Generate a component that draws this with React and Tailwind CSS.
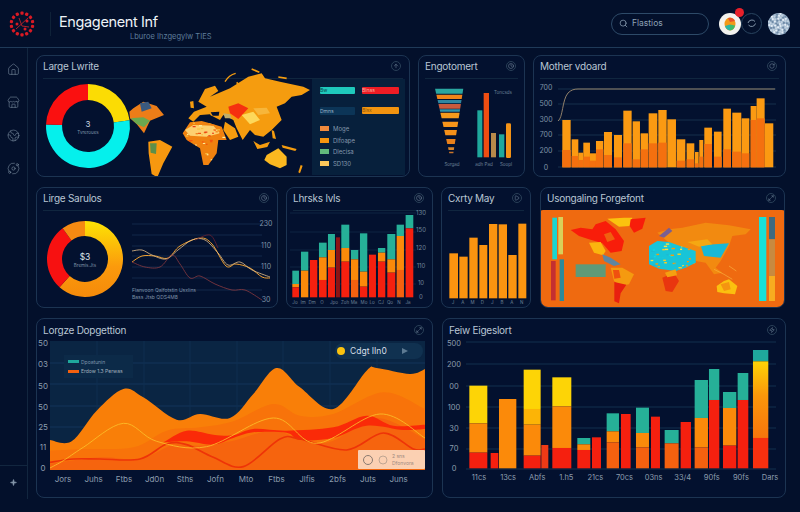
import React from "react";
import { House, Store, Earth, Orbit, Search, ArrowUp, Clock, Play, Maximize2, Zap, Sparkle, RotateCw } from "lucide-react";

const RED = "#f5200f";
const ORANGE = "#fb8a0a";
const DEEP = "#f5610f";
const TEAL = "#1fa89c";
const YELLOW = "#fdd406";

// catmull-rom through the points, returned as an svg path
const smooth = (pts) => {
  let d = `M${pts[0][0]} ${pts[0][1]}`;
  for (let i = 0; i < pts.length - 1; i++) {
    const p0 = pts[i - 1] || pts[i];
    const p1 = pts[i];
    const p2 = pts[i + 1];
    const p3 = pts[i + 2] || p2;
    const c1 = [p1[0] + (p2[0] - p0[0]) / 6, p1[1] + (p2[1] - p0[1]) / 6];
    const c2 = [p2[0] - (p3[0] - p1[0]) / 6, p2[1] - (p3[1] - p1[1]) / 6];
    d += ` C${c1[0]} ${c1[1]} ${c2[0]} ${c2[1]} ${p2[0]} ${p2[1]}`;
  }
  return d;
};

const area = (pts, bottom) =>
  `${smooth(pts)} L${pts[pts.length - 1][0]} ${bottom} L${pts[0][0]} ${bottom} Z`;

const arc = (cx, cy, ro, ri, a0, a1) => {
  const pt = (r, a) => {
    const t = ((a - 90) * Math.PI) / 180;
    return `${cx + r * Math.cos(t)} ${cy + r * Math.sin(t)}`;
  };
  const large = a1 - a0 > 180 ? 1 : 0;
  return `M${pt(ro, a0)} A${ro} ${ro} 0 ${large} 1 ${pt(ro, a1)} L${pt(ri, a1)} A${ri} ${ri} 0 ${large} 0 ${pt(ri, a0)} Z`;
};

const Poly = ({ p, f, o }) => <polygon points={p} fill={f} opacity={o} />;

// speckled land texture, fixed sequence so the picture stays the same
const Speckles = ({ id, shape, box, colors, n = 60, size = 6 }) => {
  const [x, y, w, h] = box;
  return (
    <>
      <clipPath id={id}>
        <polygon points={shape} />
      </clipPath>
      <g clipPath={`url(#${id})`}>
        {Array.from({ length: n }, (_, i) => (
          <rect
            key={i}
            x={x + ((i * 0.618034) % 1) * w}
            y={y + ((i * i * 0.0371 + i * 0.412) % 1) * h}
            width={size + (i % 3) * 2}
            height={size * 0.7}
            fill={colors[i % colors.length]}
          />
        ))}
      </g>
    </>
  );
};

const Chart = ({ x, y, w, h, children }) => (
  <svg
    viewBox={`${x} ${y} ${w} ${h}`}
    width={w}
    height={h}
    className="block shrink-0 overflow-visible"
  >
    {children}
  </svg>
);

const Tick = ({ x, y, children, anchor = "middle" }) => (
  <text x={x} y={y} textAnchor={anchor} className="fill-[#7f93a8] text-[7px]">
    {children}
  </text>
);

const Tiny = ({ x, y, children }) => (
  <text x={x} y={y} textAnchor="middle" className="fill-[#6c8197] text-[4.5px]">
    {children}
  </text>
);

const Card = ({ title, icon: Icon, width, height, line = true, children }) => (
  <section
    style={{ width, height }}
    className="shrink-0 overflow-hidden rounded-lg border border-[#1c3452] bg-[#03112f]"
  >
    <div
      className={`mx-[6px] flex h-[23px] items-center justify-between pb-[2px] pr-[2px] ${
        line ? "border-b border-[#10263f]" : ""
      }`}
    >
      <h2 className="text-[10px] leading-none tracking-tight text-[#b9c6d4]">{title}</h2>
      <span className="flex h-[10px] w-[10px] items-center justify-center rounded-full border border-[#2a4058] text-[#7d90a5]">
        <Icon size={6} />
      </span>
    </div>
    {children}
  </section>
);

/* ── Header ─────────────────────────────────────────────────────────────── */
const Logo = () => {
  const dots = Array.from({ length: 14 }, (_, i) => (i * 360) / 14);
  return (
    <svg width="28" height="28" viewBox="-14 -14 28 28" className="shrink-0">
      {dots.map((a) => (
        <rect
          key={a}
          x="-1.6"
          y="-12.4"
          width="3.2"
          height="3.2"
          rx="1"
          fill="#d91a24"
          transform={`rotate(${a})`}
        />
      ))}
      <circle cx="-5" cy="0" r="1.5" fill="#d91a24" />
      <circle cx="5" cy="-3" r="1.5" fill="#d91a24" />
      <circle cx="3" cy="5" r="1.5" fill="#d91a24" />
      <path d="M-6 5 L6 -6 M-3 -6 L0 2 L7 3" stroke="#a8222c" strokeWidth="1" fill="none" />
    </svg>
  );
};

const Speckle = () => {
  const dots = Array.from({ length: 60 }, (_, i) => {
    const r = 10.5 * Math.sqrt((i + 0.5) / 60);
    const t = i * 2.4;
    return [r * Math.cos(t), r * Math.sin(t), i % 3];
  });
  return (
    <svg width="22" height="22" viewBox="-11 -11 22 22">
      <circle r="11" fill="#9fb6cd" />
      {dots.map(([x, y, k], i) => (
        <circle key={i} cx={x} cy={y} r="1.1" fill={k === 0 ? "#e4edf5" : k === 1 ? "#6f8aa6" : "#c2d2e0"} />
      ))}
    </svg>
  );
};

const Header = () => (
  <header className="flex h-[48px] items-center border-b border-[#1f3a58] pl-[8px] pr-[10px]">
    <Logo />
    <span className="ml-[14px] h-[24px] w-px bg-[#0f2238]" />
    <div className="relative ml-[8px] h-[30px] w-[200px]">
      <div className="text-[14.5px] leading-[25px] tracking-tight text-[#eef3f7]">Engagenent Inf</div>
      <div className="absolute left-[71px] top-[24px] whitespace-nowrap text-[7.5px] leading-none text-[#5f7e9c]">
        Lburoe Ihzgegylw TIES
      </div>
    </div>
    <div className="ml-auto flex items-center">
      <div className="mr-[10px] flex h-[22px] w-[98px] items-center gap-[4px] rounded-full border border-[#2d4a68] pl-[7px] text-[8.5px] text-[#8ea2b6]">
        <Search size={9} />
        <span>Flastios</span>
      </div>
      <div className="relative h-[22px] w-[22px] rounded-full bg-[#f4f3ef]">
        <svg width="22" height="22" viewBox="0 0 22 22">
          <ellipse cx="11" cy="11" rx="5.5" ry="6.5" fill="#f39a1a" />
          <path d="M9 5a6 6 0 0 1 7 3l-5 1Z" fill="#e8542a" />
          <path d="M6 13a6 6 0 0 0 5 4.5l0-6Z" fill="#29b6a8" />
          <path d="M11 17.5a6 6 0 0 0 5-5l-5-1Z" fill="#3dbb6c" />
        </svg>
        <span className="absolute -right-[3px] -top-[5px] h-[9px] w-[9px] rounded-full bg-[#e8202a]" />
      </div>
      <svg width="21" height="21" viewBox="0 0 21 21" fill="none" className="shrink-0">
        <circle cx="10.5" cy="10.5" r="10" stroke="#2a4560" />
        <path d="M7 10a4 4 0 0 1 7-1.5M14.5 10.5a4 4 0 0 1-7 1.5" stroke="#8ea2b6" strokeWidth="0.9" />
      </svg>
      <div className="ml-[6px]">
        <Speckle />
      </div>
    </div>
  </header>
);

const Sidebar = () => (
  <aside className="flex h-[451px] w-[28px] shrink-0 flex-col items-center border-r border-[#12263f] text-[#8496aa]">
    <div className="flex flex-col items-center gap-[20px] pt-[15px] pr-[1px]">
      <House size={13} strokeWidth={1} />
      <Store size={13} strokeWidth={1} />
      <Earth size={13} strokeWidth={1} />
      <Orbit size={13} strokeWidth={1} />
    </div>
    <div className="mt-auto flex h-[34px] w-full items-center justify-center border-t border-[#12263f]">
      <Sparkle size={7} fill="#8496aa" />
    </div>
  </aside>
);

/* ── Row 1 ──────────────────────────────────────────────────────────────── */
const africaA = "38,205 60,172 95,168 130,178 155,185 170,225 145,225 140,265 115,300 100,300 90,250 50,225";

const TopMap = () => (
  <>
    <g transform="scale(0.3333)">
      <Poly f="#ec7d18" p="388,335 400,325 430,305 470,318 492,345 450,362 432,400 410,372 390,355" />
      <Poly f="#6aa84f" p="392,355 430,352 450,362 432,382 410,372" />
      <Poly f="#3a5a80" p="420,310 445,305 455,325 425,335" />
      <Poly f="#f7980f" p="445,425 480,420 517,440 490,490 472,532 455,522 446,460" />
      <Poly f="#5b8f4a" p="450,430 470,430 468,462 452,458" />
    </g>
    <g transform="translate(170 65) scale(0.3333)">
      <Poly f="#f59c0f" p="55,160 72,140 110,125 85,110 105,72 135,62 145,78 120,95 180,70 235,35 275,25 285,40 330,50 400,65 420,75 395,90 365,95 345,115 320,125 335,165 305,195 280,215 255,210 240,195 218,225 200,190 190,165 160,150 150,165 125,152 90,150 70,170" />
      <Poly f="#f0820f" p="38,205 60,172 95,168 130,178 155,185 170,225 145,225 140,265 115,300 100,300 90,250 50,225" />
      <Poly f="#f59c0f" p="165,170 195,190 205,215 180,225 160,195" />
      <Poly f="#fbb820" p="283,285 290,270 325,250 350,275 350,300 330,310 300,298" />
      <Poly f="#03112f" p="92,150 120,148 125,156 100,160" />
      <Poly f="#03112f" p="122,142 148,140 146,152 128,152" />
      <Poly f="#f5300f" p="175,125 205,115 235,130 205,162 180,145" />
      <Poly f="#fdd85a" p="215,150 250,140 270,165 240,178" />
      <Poly f="#f7b63a" p="250,130 290,128 300,145 265,150" />
      <Poly f="#bfae6a" p="160,145 180,148 185,160 165,160" />
      <Poly f="#fdd070" p="45,195 70,180 130,182 150,205 110,215 60,212" />
      <Speckles
        id="africa-top"
        shape={africaA}
        box={[40, 170, 130, 130]}
        colors={["#fdf0a0", "#f5500f", "#fbc040", "#e8300f", "#f07a10"]}
        n={70}
        size={5}
      />
      <Poly f="#f59c0f" p="250,228 270,240 300,230 292,246 262,252" />
      <Poly f="#f59c0f" p="305,195 312,198 318,222 308,220" />
      <Poly f="#f59c0f" p="335,240 380,252 376,258 338,248" />
      <Poly f="#f59c0f" p="385,322 392,300 398,302 390,325" />
      <Poly f="#f59c0f" p="60,110 70,108 72,130 62,128" />
      <path d="M165 50 C172 38 185 28 197 25" stroke="#f59c0f" strokeWidth="4" fill="none" />
      <path d="M200 52 L218 72" stroke="#f59c0f" strokeWidth="5" fill="none" />
      <path d="M245 12 L268 22" stroke="#f59c0f" strokeWidth="5" fill="none" />
      <path d="M325 36 L350 40" stroke="#f59c0f" strokeWidth="5" fill="none" />
      <path d="M300 172 L325 165" stroke="#f59c0f" strokeWidth="3" fill="none" />
    </g>
  </>
);

const CardA = () => (
  <Card title="Large Lwrite" icon={ArrowUp} width={374} height={122}>
    <div className="flex">
      <Chart x={37} y={79} w={275} h={97}>
        <path d={arc(88, 126, 42, 26, 0, 82)} fill="#fbdc04" />
        <path d={arc(88, 126, 42, 26, 82, 272)} fill="#05f0ec" />
        <path d={arc(88, 126, 42, 26, 272, 360)} fill="#fa1010" />
        <text x={88} y={127} textAnchor="middle" className="fill-[#cdd8e2] text-[8px]">3</text>
        <text x={88} y={134} textAnchor="middle" className="fill-[#7f94a9] text-[4.5px]">Tvreroues</text>
        <TopMap />
      </Chart>
      <div className="h-[96px] w-[93px] shrink-0 bg-[#07203c] px-[8px] pt-[8px]">
        <div className="grid grid-cols-2 gap-x-[7px] gap-y-[13px]">
          <div className="h-[7px] w-[35px] rounded-[1px] bg-[#1fc9bc] text-[5px] leading-[7px] text-[#0a4a50]">Bw</div>
          <div className="h-[7px] w-[37px] rounded-[1px] bg-[#ee1c24] text-[5px] leading-[7px] text-[#f7b0a0]">Blnas</div>
          <div className="h-[8px] w-[35px] rounded-[1px] bg-[#0c3557] text-[5px] leading-[8px] text-[#9bb4c8]">Dmns</div>
          <div className="h-[7px] w-[37px] rounded-[1px] bg-[#f2930f] text-[5px] leading-[7px] text-[#8a5a10]">Blsx</div>
        </div>
        <ul className="mt-[10px] flex flex-col gap-[4.5px] text-[6px] leading-[7px] text-[#8598ac]">
          {[
            ["#f08a3c", "Moge"],
            ["#f5950f", "Dlfoape"],
            ["#62bb7c", "Dlecisa"],
            ["#fbc75a", "SD130"],
          ].map(([c, t]) => (
            <li key={t} className="flex items-center gap-[4px]">
              <span style={{ background: c }} className="h-[5px] w-[9px]" />
              {t}
            </li>
          ))}
        </ul>
      </div>
    </div>
  </Card>
);

const funnel = [
  [266, 281, "#2aa6a0"],
  [284, 297, "#f0851a"],
  [300, 310, "#2f86a0"],
  [312, 326, "#c95a3c"],
  [328, 335, "#3092aa"],
  [338, 355, "#f59a1c"],
  [365, 381, "#f7951a"],
  [390, 406, "#f59019"],
  [417, 432, "#e8801a"],
  [442, 450, "#d9862a"],
  [455, 460, "#c9752a"],
];

const CardB = () => (
  <Card title="Engotomert" icon={Clock} width={107} height={122}>
    <Chart x={419} y={79} w={105} h={97}>
      <g transform="translate(410 0) scale(0.3333)">
        {funnel.map(([a, b, c]) => {
          const l = (y) => 75 + ((y - 265) * 43) / 195;
          const r = (y) => 160 - ((y - 265) * 30) / 195;
          return (
            <polygon key={a} fill={c} points={`${l(a)},${a} ${r(a)},${a} ${r(b)},${b} ${l(b)},${b}`} />
          );
        })}
        <rect x="202" y="331" width="15" height="141" fill={TEAL} />
        <rect x="221" y="279" width="16" height="193" fill="#f04e12" />
        <rect x="243" y="399" width="15" height="73" fill="#b88a4a" />
        <rect x="267" y="403" width="16" height="69" fill={TEAL} />
        <rect x="288" y="370" width="15" height="104" rx="4" fill="#f59417" />
      </g>
      <Tiny x={503} y={94}>Toncsds</Tiny>
      <Tiny x={452} y={166}>Sorgad</Tiny>
      <Tiny x={484} y={166}>adh Pad</Tiny>
      <Tiny x={506} y={166}>Soopl</Tiny>
    </Chart>
  </Card>
);

const motherBars = [
  [457, 482, 360, 450], [485, 505, 418, 468], [505, 520, 458, 480], [520, 540, 428, 470],
  [540, 558, 460, 482], [558, 580, 423, 448], [582, 606, 396, 465], [612, 636, 405, 472],
  [640, 665, 332, 430], [668, 690, 364, 478], [692, 714, 400, 448], [716, 742, 340, 430],
  [745, 770, 330, 428], [772, 798, 358, 502], [800, 826, 418, 482], [830, 853, 430, 478],
  [855, 866, 456, 490], [868, 880, 420, 470], [883, 906, 383, 432], [912, 935, 395, 470],
  [940, 963, 326, 448], [967, 994, 338, 455], [995, 1018, 355, 460], [1022, 1040, 318, 360],
  [1040, 1064, 295, 355], [1065, 1090, 370, 502],
];

const CardC = () => (
  <Card title="Mother vdoard" icon={RotateCw} width={253} height={122}>
    <Chart x={534} y={79} w={251} h={97}>
      {[89, 104, 120, 135, 151, 167].map((y) => (
        <line key={y} x1={558} x2={776} y1={y} y2={y} stroke="#16304d" strokeWidth="1" />
      ))}
      {["700", "500", "300", "700", "200", "0"].map((t, i) => (
        <Tick key={i} x={546} y={[90, 106, 122, 137, 153, 170][i]}>{t}</Tick>
      ))}
      <g transform="translate(410 0) scale(0.3333)">
        {motherBars.map(([a, b, t, m]) => (
          <g key={a}>
            <rect x={a} y={t} width={b - a} height={502 - t} fill="#fb9a12" />
            <rect x={a} y={m} width={b - a} height={502 - m} fill="#f4700f" />
          </g>
        ))}
      </g>
      <path d="M558 121 C563 118 562 100 568 93 C571 90 574 89 578 89 L775 89" fill="none" stroke="#a08c70" strokeWidth="0.9" />
    </Chart>
  </Card>
);

/* ── Row 2 ──────────────────────────────────────────────────────────────── */
const CardD = () => (
  <Card title="Lirge Sarulos" icon={Clock} width={242} height={121}>
    <Chart x={37} y={211} w={240} h={96}>
      <defs>
        <linearGradient id="dgrad" x1="0" y1="0" x2="0" y2="1">
          <stop offset="0" stopColor="#fde404" />
          <stop offset="0.6" stopColor="#fb9a0c" />
          <stop offset="1" stopColor="#f58a0a" />
        </linearGradient>
      </defs>
      <path d={arc(85, 259, 38, 23, 0, 222)} fill="url(#dgrad)" />
      <path d={arc(85, 259, 38, 23, 222, 324)} fill="#f71111" />
      <path d={arc(85, 259, 38, 23, 324, 360)} fill="#f58a12" />
      <text x={85} y={260} textAnchor="middle" className="fill-[#dbe4ec] text-[8.5px]">$3</text>
      <text x={85} y={267} textAnchor="middle" className="fill-[#8094a9] text-[4.5px]">Bremis.Jts</text>
      {[224, 235, 246, 256, 267, 278, 290].map((y) => (
        <line key={y} x1={132} x2={262} y1={y} y2={y} stroke="#12294a" strokeWidth="1" />
      ))}
      <Tick x={266} y={226}>230</Tick>
      <Tick x={266} y={248}>110</Tick>
      <Tick x={266} y={269}>110</Tick>
      <Tick x={266} y={302}>30</Tick>
      <path d={smooth([[132, 262], [142, 256], [155, 256], [168, 258], [180, 246], [200, 238], [212, 244], [226, 266], [236, 264], [250, 268], [262, 277], [270, 278]])} fill="none" stroke="#f0a030" strokeWidth="1" />
      <path d={smooth([[132, 251], [142, 250], [152, 255], [166, 259], [178, 250], [192, 240], [205, 240], [218, 253], [228, 265], [240, 262], [252, 270], [270, 277]])} fill="none" stroke="#e8c08a" strokeWidth="0.8" />
      <path d={smooth([[132, 262], [145, 267], [160, 267], [172, 255], [180, 264], [190, 278], [200, 276], [215, 284], [232, 290], [245, 290], [262, 300]])} fill="none" stroke="#8a3a40" strokeWidth="0.8" />
      <path d={smooth([[195, 240], [210, 235], [218, 248]])} fill="none" stroke="#6a2030" strokeWidth="0.8" />
      <text x={132} y={292} className="fill-[#7c90a6] text-[5px]">Flanvoon Qalfotstin Usxlins</text>
      <text x={132} y={299} className="fill-[#7c90a6] text-[5px]">Bass Jtsb QDS4M8</text>
    </Chart>
  </Card>
);

const stacked = [
  [877, 897, [[272, "t"], [312, "o"], [322, "r"]]],
  [903, 925, [[215, "t"], [272, "o"]]],
  [930, 952, [[240, "r"]]],
  [957, 980, [[188, "t"], [232, "o"], [300, "r"]]],
  [984, 1005, [[162, "t"], [210, "o"], [263, "r"]]],
  [1008, 1020, [[172, "d"]]],
  [1024, 1048, [[134, "t"], [204, "o"], [245, "r"]]],
  [1053, 1075, [[210, "t"], [238, "o"], [300, "p"]]],
  [1080, 1102, [[160, "t"], [275, "o"], [320, "r"]]],
  [1107, 1128, [[224, "r"]]],
  [1134, 1156, [[204, "t"], [218, "o"], [245, "r"]]],
  [1162, 1186, [[162, "t"], [238, "o"], [278, "r"]]],
  [1190, 1212, [[134, "t"], [168, "o"], [270, "p"]]],
  [1217, 1240, [[105, "t"], [145, "r"]]],
];

const tone = { t: "#26b098", o: ORANGE, r: RED, d: "#8e1414", p: DEEP, y: YELLOW };

const Stack = ({ a, b, segs, bottom }) =>
  segs.map(([top, c], i) => {
    const end = segs[i + 1] ? segs[i + 1][0] : bottom;
    return <rect key={top} x={a} y={top} width={b - a} height={end - top} fill={tone[c]} />;
  });

const CardE = () => (
  <Card title="Lhrsks lvls" icon={Clock} width={147} height={121}>
    <Chart x={287} y={211} w={145} h={96}>
      {[213, 232, 250, 267, 284].map((y) => (
        <line key={y} x1={290} x2={416} y1={y} y2={y} stroke="#0f2542" strokeWidth="1" />
      ))}
      <g transform="translate(0 180) scale(0.3333)">
        {stacked.map(([a, b, segs]) => (
          <Stack key={a} a={a} b={b} segs={segs} bottom={352} />
        ))}
      </g>
      {["130", "150", "120", "110", "10", "0"].map((t, i) => (
        <text key={i} x={421} y={[215, 232, 250, 268, 285, 299][i]} textAnchor="middle" className="fill-[#71869c] text-[6px]">
          {t}
        </text>
      ))}
      {[295, 303, 312, 322, 334, 345, 354, 364, 372, 381, 390, 399, 408].map((x, i) => (
        <Tiny key={x} x={x} y={304}>
          {["Jo", "Im", "Dm", "O", "Jpo", "Zoh", "Ma", "Mo", "Lo", "CJ", "Qo", "N", "Ja"][i]}
        </Tiny>
      ))}
    </Chart>
  </Card>
);

const CardF = () => (
  <Card title="Cxrty May" icon={Play} width={90} height={121}>
    <Chart x={443} y={211} w={88} h={96}>
      <g transform="translate(435 180) scale(0.3333)">
        {[[46, 72, 220], [76, 101, 230], [106, 131, 173], [136, 160, 195], [165, 190, 132], [194, 219, 133], [223, 248, 225], [253, 277, 131]].map(([a, b, t]) => (
          <rect key={a} x={a} y={t} width={b - a} height={355 - t} fill="#fb9410" />
        ))}
      </g>
      {["J", "A", "M", "D", "J", "B", "A", "N"].map((t, i) => (
        <Tiny key={i} x={454 + i * 9.8} y={304}>{t}</Tiny>
      ))}
    </Chart>
  </Card>
);

const euroG = "0,175 5,150 0,120 25,105 60,108 100,122 140,135 140,170 110,185 80,195 30,188";

const CardG = () => (
  <Card title="Usongaling Forgefont" icon={Maximize2} width={245} height={121}>
    <Chart x={542} y={210} w={243} h={97}>
      <rect x={541} y={209} width={245} height={99} rx={3} fill="#ef6a10" />
      <g transform="translate(540 205) scale(0.3333)">
        <rect x="40" y="35" width="14" height="125" fill="#18d6d0" />
        <rect x="58" y="33" width="14" height="112" fill="#d8d05a" />
        <rect x="36" y="165" width="14" height="118" fill="#c43030" />
        <rect x="62" y="160" width="13" height="125" fill="#2e8a9a" />
        <Poly f="#fbc20e" p="205,38 255,35 280,35 272,60 240,62" />
        <Poly f="#f81d0a" p="275,40 320,35 310,68 285,80 272,60" />
        <Poly f="#f81d0a" p="95,72 125,65 160,70 170,55 200,45 230,70 255,105 248,135 215,140 190,112 150,100 120,90" />
        <Poly f="#f0600f" p="195,85 215,78 228,100 205,108" />
        <Poly f="#fbb50e" p="150,110 185,108 200,135 192,148 165,140" />
        <Poly f="#5f86a0" p="190,145 215,155 245,175 225,180 195,165" />
        <Poly f="#f59a0f" p="215,185 250,185 285,205 270,235 245,240 225,225" />
        <Poly f="#f0500f" p="222,192 240,192 245,215 226,218" />
        <Poly f="#e8200f" p="226,228 262,236 245,262 240,292 226,286" />
        <rect x="110" y="175" width="90" height="38" fill="#5f9a78" />
      </g>
      <g transform="translate(650 205) scale(0.3333)">
        <Poly f="#f28a10" p="25,80 60,70 100,65 170,50 240,58 305,70 290,85 250,90 240,120 215,165 200,185 220,200 195,205 170,170 140,165 135,150 100,125 60,110" />
        <Poly f="#7a5f90" p="30,90 60,65 70,75 45,95" />
        <Poly f="#18c4d8" p="0,175 0,120 25,105 60,108 100,122 140,135 140,170 110,185 80,195 30,188" />
        <Speckles
          id="euro-g"
          shape={euroG}
          box={[0, 105, 140, 90]}
          colors={["#fbd020", "#18c8d8", "#18c8d8", "#f59a10", "#12d8e0", "#20b8d0", "#fbe040"]}
          n={70}
          size={6}
        />
        <Poly f="#18b8d6" p="155,118 240,112 215,155 165,150" />
        <Poly f="#f5a812" p="115,108 175,100 190,115 150,122" />
        <Poly f="#e9360f" p="40,215 75,200 90,225 70,258 50,255" />
        <Poly f="#f5a010" p="48,200 80,190 84,208 55,214" />
        <Poly f="#fbc00f" p="203,240 225,225 240,220 265,240 258,265 225,262 205,258" />
        <Poly f="#f59410" p="215,235 240,228 245,250 225,255" />
        <path d="M195 190 L225 205 L250 220 M240 180 L262 195" stroke="#f9b040" strokeWidth="2" fill="none" />
        <rect x="330" y="33" width="22" height="252" fill="#17e0d8" />
        <rect x="360" y="33" width="18" height="67" fill="#3e6a80" />
        <rect x="360" y="100" width="18" height="110" fill="#c88a40" />
        <rect x="360" y="210" width="18" height="75" fill="#f7ad20" />
      </g>
    </Chart>
  </Card>
);

/* ── Row 3 ──────────────────────────────────────────────────────────────── */
const CardH = () => {
  const top = [[150, 378], [215, 382], [290, 290], [370, 225], [430, 250], [530, 317], [600, 300], [690, 312], [760, 240], [830, 162], [900, 220], [1000, 285], [1100, 170], [1130, 162], [1230, 180], [1275, 165]];
  const mid = [[150, 410], [250, 405], [400, 400], [500, 350], [600, 340], [700, 322], [820, 270], [900, 305], [1000, 300], [1150, 235], [1275, 285]];
  const low = [[150, 450], [300, 430], [420, 435], [520, 392], [600, 395], [700, 380], [820, 350], [920, 382], [1000, 380], [1130, 312], [1275, 375]];
  const bandTop = [[490, 385], [560, 350], [640, 362], [700, 364], [760, 345], [860, 350], [1000, 340], [1100, 305], [1180, 335], [1275, 332]];
  const bandLow = [[1275, 345], [1210, 348], [1100, 335], [1000, 372], [900, 378], [860, 356], [760, 355], [700, 372], [640, 392], [560, 382], [490, 385]];
  const redLine = [[150, 445], [220, 435], [300, 435], [420, 435], [500, 390], [560, 392], [640, 430], [730, 458], [840, 375], [900, 375], [1040, 408], [1150, 357], [1240, 405], [1275, 405]];
  const yellowLine = [[150, 462], [190, 440], [250, 400], [370, 328], [470, 382], [620, 398], [820, 312], [950, 388], [1140, 300], [1275, 372]];
  return (
    <Card title="Lorgze Dopgettion" icon={Maximize2} width={397} height={180} line={false}>
      <div className="flex justify-center">
        <Chart x={37} y={343} w={395} h={155}>
          <rect x={50} y={342} width={375} height={128} fill="#0a2543" />
          {[364, 385, 407, 428, 449].map((y) => (
            <line key={y} x1={50} x2={425} y1={y} y2={y} stroke="#12355a" strokeWidth="1" />
          ))}
          {[97, 144, 190, 237, 283, 330, 377].map((x) => (
            <line key={x} x1={x} x2={x} y1={342} y2={470} stroke="#0f2e50" strokeWidth="1" />
          ))}
          <g transform="translate(0 315) scale(0.3333)">
            <path d={area(top, 467)} fill="#f97f08" />
            <path d={area(mid, 467)} fill="#f8730a" />
            <path d={area(low, 467)} fill="#f6640e" />
            <path d={`${smooth(bandTop)} L${smooth(bandLow).slice(1)} Z`} fill="#fa2a08" />
            <path d={smooth(redLine)} fill="none" stroke="#ee3408" strokeWidth="5" />
            <path d={smooth(yellowLine)} fill="none" stroke="#fbc12a" strokeWidth="2.5" />
          </g>
          {["50", "03", "50", "50", "25", "11", "0"].map((t, i) => (
            <text key={i} x={43} y={[347, 368, 390, 411, 431, 451, 472][i]} textAnchor="middle" className="fill-[#8c9dae] text-[8px]">
              {t}
            </text>
          ))}
          {["Jors", "Juhs", "Ftbs", "Jd0n", "Sths", "Jofn", "Mto", "Ftbs", "Jlfis", "2bfs", "Juts", "Juns"].map((t, i) => (
            <text key={i} x={63 + i * 30.5} y={483} textAnchor="middle" className="fill-[#8c9dae] text-[8px]">
              {t}
            </text>
          ))}
          <rect x={64} y={356} width={69} height={23} fill="#0c2a48" />
          <rect x={68} y={361} width={11} height={3} fill={TEAL} />
          <rect x={68} y={371} width={11} height={3} fill="#f2600f" />
          <text x={81} y={365} className="fill-[#7d95ab] text-[5px]">Dpoatunin</text>
          <text x={81} y={374} className="fill-[#a2b0bd] text-[5px]">Erdow 1.3 Perwas</text>
          <rect x={335} y={344} width={88} height={16} rx={8} fill="#103150" />
          <circle cx={341} cy={352} r={4} fill="#fbc20e" />
          <text x={350} y={355} className="fill-[#d5dee6] text-[8.5px]">Cdgt IIn0</text>
          <polygon points="402,349 408,352 402,355" fill="#5d7a92" />
          <rect x={358} y={451} width={67} height={19} rx={1} fill="#fbd0b2" />
          <circle cx={368} cy={461} r={4.5} fill="none" stroke="#8a7a70" strokeWidth="1" />
          <circle cx={383} cy={461} r={4} fill="none" stroke="#b09a8a" strokeWidth="0.8" />
          <text x={392} y={459} className="fill-[#a08a80] text-[5px]">2 sns</text>
          <text x={392} y={466} className="fill-[#a08a80] text-[5px]">Dfonvora</text>
        </Chart>
      </div>
    </Card>
  );
};

const endBars = [
  [103, 157, [[215, "y"], [328, "o"], [416, "r"]]],
  [167, 190, [[417, "r"]]],
  [192, 244, [[255, "o"]]],
  [266, 317, [[167, "y"], [285, "h"], [332, "o"], [425, "r"]]],
  [319, 340, [[393, "q"]]],
  [352, 409, [[190, "y"], [277, "o"], [402, "r"]]],
  [427, 466, [[372, "t"], [391, "o"], [408, "r"]]],
  [471, 498, [[370, "r"]]],
  [515, 552, [[298, "t"], [352, "o"], [385, "p"]]],
  [558, 587, [[300, "r"]]],
  [603, 642, [[281, "t"], [357, "o"], [400, "p"]]],
  [648, 675, [[308, "r"]]],
  [689, 731, [[348, "t"], [388, "p"]]],
  [737, 768, [[324, "r"]]],
  [779, 819, [[198, "t"], [312, "o"], [400, "p"]]],
  [822, 853, [[165, "t"], [258, "r"]]],
  [864, 904, [[234, "t"], [282, "o"], [395, "r"]]],
  [908, 940, [[177, "t"], [258, "r"]]],
];

const CardI = () => (
  <Card title="Feiw Eigeslort" icon={Zap} width={344} height={180} line={false}>
    <Chart x={443} y={343} w={342} h={155}>
      <defs>
        <linearGradient id="last" x1="0" y1="0" x2="0" y2="1">
          <stop offset="0" stopColor="#fdd406" />
          <stop offset="0.45" stopColor="#fb960a" />
          <stop offset="1" stopColor="#f7750c" />
        </linearGradient>
      </defs>
      {[343, 365, 387, 408, 429, 450, 470].map((y) => (
        <line key={y} x1={466} x2={776} y1={y} y2={y} stroke="#13304f" strokeWidth="1" />
      ))}
      <g transform="translate(435 315) scale(0.3333)">
        {endBars.map(([a, b, segs]) =>
          segs.map(([top, c], i) => {
            const end = segs[i + 1] ? segs[i + 1][0] : 463;
            const fill = c === "h" ? "#fcb406" : c === "q" ? "#ee3a16" : tone[c];
            return <rect key={top} x={a} y={top} width={b - a} height={end - top} fill={fill} />;
          })
        )}
        <rect x="954" y="108" width="46" height="34" fill={TEAL} />
        <rect x="954" y="142" width="46" height="230" fill="url(#last)" />
        <rect x="954" y="372" width="46" height="91" fill="#f7300f" />
      </g>
      {["500", "200", "00", "100", "30", "70", "0"].map((t, i) => (
        <text key={i} x={454} y={[347, 368, 390, 411, 432, 452, 472][i]} textAnchor="middle" className="fill-[#8c9dae] text-[7.5px]">
          {t}
        </text>
      ))}
      {["11cs", "13cs", "Abfs", "1.h5", "21cs", "70cs", "03ns", "33/4", "90fs", "90fs", "Dars"].map((t, i) => (
        <text key={i} x={479 + i * 29.1} y={481} textAnchor="middle" className="fill-[#8c9dae] text-[7.5px]">
          {t}
        </text>
      ))}
    </Chart>
  </Card>
);

export default function App() {
  return (
    <div className="flex h-[512px] w-[800px] flex-col overflow-hidden bg-[#03102b] font-[family-name:Inter,sans-serif]">
      <Header />
      <div className="flex">
        <Sidebar />
        <main className="flex flex-col gap-[10px] pl-[8px] pt-[7px]">
          <div className="flex gap-[8px]">
            <CardA />
            <CardB />
            <CardC />
          </div>
          <div className="flex gap-[8px]">
            <CardD />
            <CardE />
            <CardF />
            <div className="ml-px">
              <CardG />
            </div>
          </div>
          <div className="flex gap-[9px]">
            <CardH />
            <CardI />
          </div>
        </main>
      </div>
    </div>
  );
}
